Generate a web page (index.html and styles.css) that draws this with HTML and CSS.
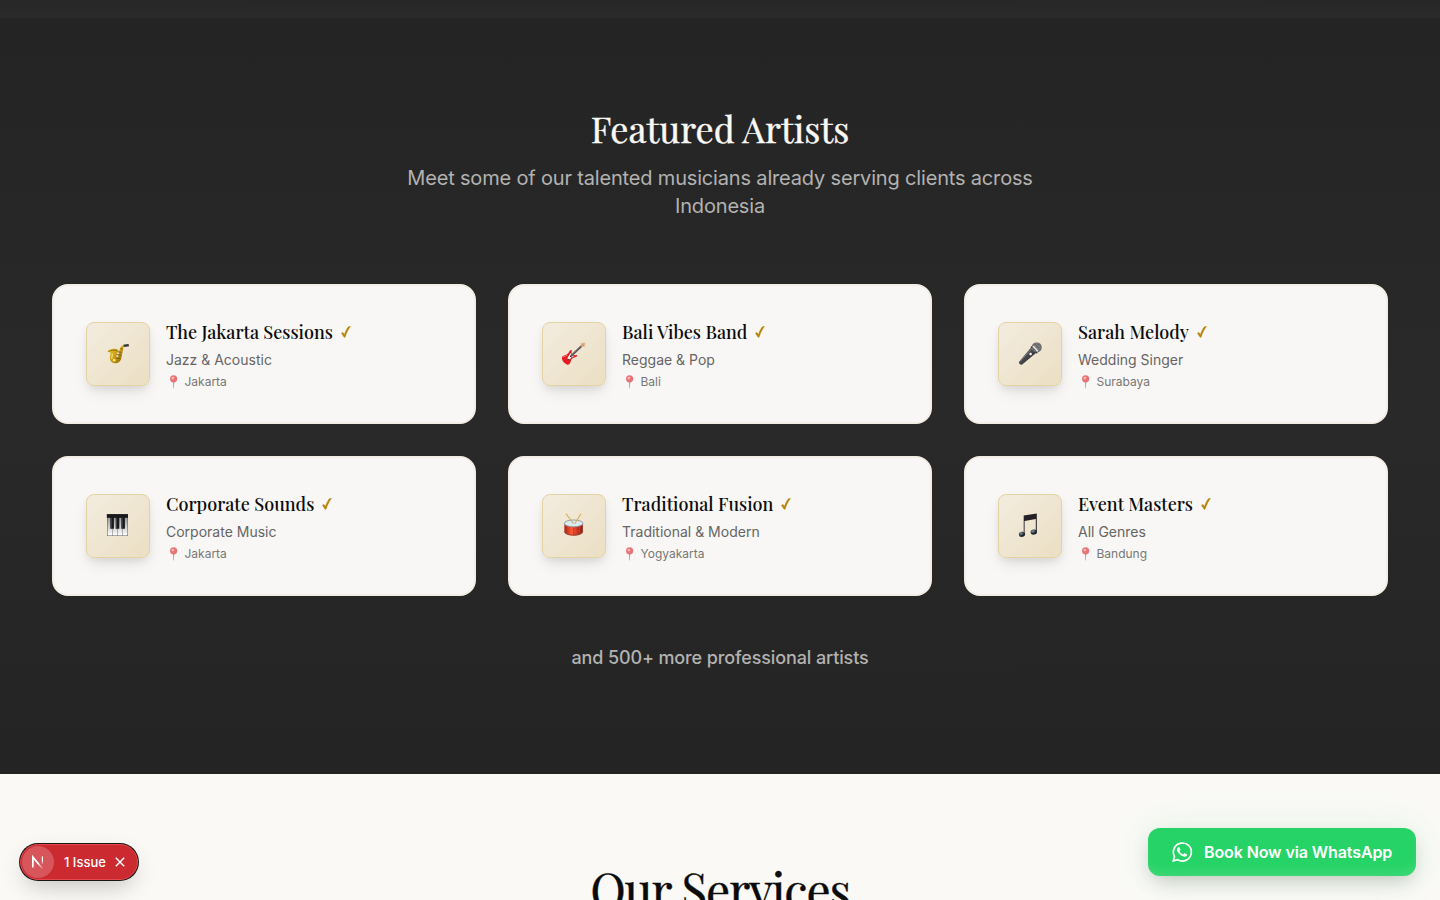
FILE: index.html
```html
<!DOCTYPE html>
<html lang="en">
<head>
<meta charset="utf-8">
<title>Featured Artists</title>
<link rel="stylesheet" href="styles.css">
</head>
<body>
<svg class="defs" width="0" height="0" aria-hidden="true">
  <defs>
    <linearGradient id="gold" x1="0" y1="0" x2="1" y2="1"><stop offset="0" stop-color="#f4d53a"/><stop offset=".5" stop-color="#c99a12"/><stop offset="1" stop-color="#705010"/></linearGradient>
    <linearGradient id="black" x1="0" y1="0" x2="1" y2="1"><stop offset="0" stop-color="#77777b"/><stop offset="1" stop-color="#161618"/></linearGradient>
    <linearGradient id="keys" x1="0" y1="0" x2="0" y2="1"><stop offset="0" stop-color="#999"/><stop offset="1" stop-color="#fff"/></linearGradient>
    <linearGradient id="drumred" x1="0" y1="0" x2="1" y2="0"><stop offset="0" stop-color="#a81f12"/><stop offset=".4" stop-color="#ff5a36"/><stop offset="1" stop-color="#8e170e"/></linearGradient>
    <radialGradient id="note" cx=".4" cy=".3"><stop offset="0" stop-color="#8296a3"/><stop offset="1" stop-color="#1b2025"/></radialGradient>
    <symbol id="check" viewBox="0 0 10 12"><path d="M.3 7.200 1.900 6.300 3.400 8.300C4.500 5 6 2 7.600.6L9.800.3C7.500 3 5.600 7 4.200 11.200L3.100 11.500Z" fill="#b8860b" stroke="#b8860b" stroke-width=".2"/></symbol>
    <symbol id="pin" viewBox="0 0 14 14"><path d="M7 6h1.300l-.4 7.500h-.5z" fill="#65717a"/><circle cx="7.600" cy="3.800" r="3.600" fill="#df2f35"/><circle cx="6.900" cy="3.100" r="1.300" fill="#ff9a96"/></symbol>
  </defs>
</svg>
<div class="previous"></div>
<section class="artists">
  <h2 class="heading">Featured Artists</h2>
  <p class="lead">Meet some of our talented musicians already serving clients across Indonesia</p>
  <div class="grid">
    <article class="card">
      <div class="tile"><svg width="24" height="24" viewBox="0 0 24 24"><path d="M1.300 9.600C3.500 6.800 9.500 5.800 12.600 8.200L11 11.500C10.500 14 10.200 15.200 10.700 15.800c.6.500 1.200-.8 1.600-2.300l1.500-6.300c.4-2 1.800-3.700 4.200-4.200l4.200-.8.3 1.400-4.200 1c-1 .4-.9 1.300-1.200 3l-1.500 7.500c-.8 4.800-3.700 6.900-7.800 5.900-3-.8-4.400-3.300-3.800-6.300l.6-3.900C4.500 10.600 3 10.200 1.300 9.600z" fill="url(#gold)"/><path d="M17.200 2.700 22.500 2l.6 2.200-4.700.7z" fill="#30363a"/><path d="M11.500 9.700 15.500 10.300M10.700 12.500l4.300.7M10 15.700l4.200.8M14.700 6.700l2 .4" stroke="#604706" stroke-width=".8"/><path d="M2.500 9.500C5 8 8.500 7.600 11 8.600" fill="none" stroke="#76580a" stroke-width=".8"/><circle cx="8.200" cy="18.200" r="1.400" fill="#ffe657"/><path d="M6.300 11.500 5.800 17" stroke="#fff08a" stroke-width="1"/></svg></div>
      <div class="info">
        <h3 class="name"><span>The Jakarta Sessions</span><svg class="check"><use href="#check"/></svg></h3>
        <p class="genre">Jazz &amp; Acoustic</p>
        <p class="city"><svg class="pin"><use href="#pin"/></svg>Jakarta</p>
      </div>
    </article>
    <article class="card">
      <div class="tile"><svg width="24" height="24" viewBox="0 0 24 24"><path d="M.2 14.800c1.500-1.700 4-1.400 5.800-3.200 1.200-1.200 1.300-3.200 3-3.500.8-.1 1 .8.700 1.600-.5 1.300.1 2 1.100 2.700.9.700 2 1.100 3.300.6 1.200-.4 1.500.7.8 1.300-1.400 1.100-3.700 1.100-4.900 2.500-1.700 2-1.300 5.700-4.100 5.900C3.500 22.800-1.300 18 .2 14.800z" fill="#e51b23"/><path d="M1 15c1.500-.9 3-.8 4.400-1.900" stroke="#ff7470" fill="none"/><path d="M5.300 16.200 8.600 11l3.300 3.300-5.200 3.500z" fill="#eee"/><path d="M8.800 14.200 19.800 3.800" stroke="#555055" stroke-width="2"/><path d="m9.500 12.800 9.900-9.500" stroke="#b7a9a7" stroke-width=".5"/><path d="m18.400 3.400 2.200-2.700c1-.7 2.500-.1 2.900.9.200 1.200-.6 2-3.200 3.600z" fill="#e2b188"/><path d="m19.200 1.300 3.200 3.300" stroke="#936e51" stroke-width=".6"/><path d="m5.800 16.800 1.700 1.500M8 14l1.700 1.700" stroke="#383b40"/></svg></div>
      <div class="info">
        <h3 class="name"><span>Bali Vibes Band</span><svg class="check"><use href="#check"/></svg></h3>
        <p class="genre">Reggae &amp; Pop</p>
        <p class="city"><svg class="pin"><use href="#pin"/></svg>Bali</p>
      </div>
    </article>
    <article class="card">
      <div class="tile mic"><svg width="24" height="24" viewBox="0 0 24 24"><path d="M12.600 6 18 11 4.200 22.500c-1.300 1-4-1-3.100-2.800z" fill="url(#black)"/><path d="m2 19.500 10.800-11.800" stroke="#8c8c90" stroke-width=".7"/><path d="M12.600 5.500 18.300 11.600l1.600-.7-6.500-7z" fill="#242426"/><circle cx="18.700" cy="5.400" r="5" fill="#656567"/><path d="m14.300 4.400 5.600 5.500M15.500 2.500l6.200 6.200M17.400 1l5.400 5.500M14 7.500 20 1M15.800 9l6.400-6.200M18 10l5.200-5" stroke="#999" stroke-width=".5"/><path d="m15 4 4.900 5.300" stroke="#ededed" stroke-width="1.300"/><circle cx="12.600" cy="12" r="1.200" fill="#fff"/></svg></div>
      <div class="info">
        <h3 class="name"><span>Sarah Melody</span><svg class="check"><use href="#check"/></svg></h3>
        <p class="genre">Wedding Singer</p>
        <p class="city"><svg class="pin"><use href="#pin"/></svg>Surabaya</p>
      </div>
    </article>
    <article class="card">
      <div class="tile"><svg width="24" height="24" viewBox="0 0 24 24"><path d="M1 0h21v22H1z" fill="#555"/><path d="M1.500 3.500h4.600v18H1.500zM6.500 3.500h4.600v18H6.500zM11.500 3.500h4.800v18h-4.800zM16.700 3.500h4.800v18h-4.800z" fill="url(#keys)"/><path d="M.8.200H22v3.500H.8zM4.300 3.500h3.600v11.200H4.300zM9.700 3.500h3.600v11.200H9.700zM15.300 3.500h3.600v11.200h-3.600z" fill="#18191b"/><path d="M5.200 4v10M10.600 4v10M16.200 4v10" stroke="#606165" stroke-width=".6"/></svg></div>
      <div class="info">
        <h3 class="name"><span>Corporate Sounds</span><svg class="check"><use href="#check"/></svg></h3>
        <p class="genre">Corporate Music</p>
        <p class="city"><svg class="pin"><use href="#pin"/></svg>Jakarta</p>
      </div>
    </article>
    <article class="card">
      <div class="tile"><svg width="24" height="24" viewBox="0 0 24 24"><g transform="translate(0 -.6)"><path d="M2.400 9.800v8.700c1.200 5.100 17.200 5.100 18.400 0V9.800z" fill="url(#drumred)"/><path d="M2.500 18c1.500 4.800 16.700 4.800 18.200 0" fill="none" stroke="#8a4a44" stroke-width=".9"/><path d="M5.500 13v6.500M11.600 14v7.500M17.700 13v6.500" stroke="#c83b29" stroke-width="1.100"/><ellipse cx="11.600" cy="10" rx="9.300" ry="3.400" fill="#dcecf3" stroke="#8b999e" stroke-width=".9"/><path d="m4.300.8 7 9.200M18.700.8 13 10" stroke="#d5ae68" stroke-width="1.100" stroke-linecap="round"/></g></svg></div>
      <div class="info">
        <h3 class="name"><span>Traditional Fusion</span><svg class="check"><use href="#check"/></svg></h3>
        <p class="genre">Traditional &amp; Modern</p>
        <p class="city"><svg class="pin"><use href="#pin"/></svg>Yogyakarta</p>
      </div>
    </article>
    <article class="card">
      <div class="tile note"><svg width="24" height="24" viewBox="0 0 24 24"><path d="M6.700 1.600 19.800-.6v18.800h-1V5.100L7.600 7.100v13.400H6.700z" fill="#252126"/><ellipse cx="4.900" cy="20.300" rx="3.100" ry="2.500" fill="url(#note)" transform="rotate(-12 5 20)"/><ellipse cx="16.800" cy="18" rx="3.200" ry="2.500" fill="url(#note)" transform="rotate(-12 17 18)"/></svg></div>
      <div class="info">
        <h3 class="name"><span>Event Masters</span><svg class="check"><use href="#check"/></svg></h3>
        <p class="genre">All Genres</p>
        <p class="city"><svg class="pin"><use href="#pin"/></svg>Bandung</p>
      </div>
    </article>
  </div>
  <p class="more">and 500+ more professional artists</p>
</section>
<section class="services">
  <h2 class="services-heading">Our Services</h2>
</section>
<div class="issue">
  <span class="logo"><svg width="18" height="18" viewBox="0 0 18 18"><defs><linearGradient id="fade" x1="0" y1="0" x2="0" y2="1"><stop offset=".5" stop-color="#fff"/><stop offset="1" stop-color="#fff" stop-opacity=".1"/></linearGradient></defs><path d="M3.800 14.500V4L13.500 15.800" fill="none" stroke="url(#fade)" stroke-width="1.500"/><path d="M3.800 14.500V4l6 7.300" fill="none" stroke="#fff" stroke-width="1.500"/><path d="M12.800 3.500h1.200v8h-1.200z" fill="url(#fade)"/></svg></span>
  <span class="issue-text">1 Issue</span>
  <svg width="10" height="10" viewBox="0 0 10 10"><path d="m.8.800 8.400 8.400M9.200.800.800 9.200" stroke="#fff" stroke-width="1.400"/></svg>
</div>
<a class="book"><svg width="20" height="20" viewBox="0 0 24 24" fill="#fff"><path d="M17.472 14.382c-.297-.149-1.758-.867-2.030-.967-.273-.099-.471-.148-.670.150-.197.297-.767.966-.940 1.164-.173.199-.347.223-.644.075-.297-.150-1.255-.463-2.390-1.475-.883-.788-1.480-1.761-1.653-2.059-.173-.297-.018-.458.130-.606.134-.133.298-.347.446-.520.149-.174.198-.298.298-.497.099-.198.050-.371-.025-.520-.075-.149-.669-1.612-.916-2.207-.242-.579-.487-.500-.669-.510-.173-.008-.371-.010-.570-.010-.198 0-.520.074-.792.372-.272.297-1.040 1.016-1.040 2.479 0 1.462 1.065 2.875 1.213 3.074.149.198 2.096 3.200 5.077 4.487.709.306 1.262.489 1.694.625.712.227 1.360.195 1.871.118.571-.085 1.758-.719 2.006-1.413.248-.694.248-1.289.173-1.413-.074-.124-.272-.198-.570-.347z"/><path d="M1.500 22.700 3 17.200A10.800 10.800 0 1 1 7 21.300Z" fill="none" stroke="#fff" stroke-width="2"/></svg><span>Book Now via WhatsApp</span></a>
</body>
</html>
```

FILE: styles.css
```css
* { box-sizing: border-box; }
body { margin: 0; height: 900px; overflow: hidden; background: #faf9f6; font-family: Inter, "Liberation Sans", sans-serif; }
h2, h3, p { margin: 0; }
svg { display: block; flex: none; overflow: visible; }
.defs { position: absolute; }
.previous { height: 18px; background: linear-gradient(#272727, #2a2a2a); }
.artists { height: 756px; padding: 84px 52px 0; background: linear-gradient(#242424, #292929 50%, #242424); text-align: center; }
.heading, .services-heading, .name { font-family: "Playfair Display", "Liberation Serif", serif; font-weight: 500; }
.heading { height: 54px; line-height: 53px; font-size: 36px; font-weight: 400; color: #faf9f6; -webkit-text-stroke: .4px #faf9f6; }
.lead { width: 672px; margin: 8px auto 0; font-size: 20px; line-height: 28px; letter-spacing: -.17px; color: #b3b2b1; }
.grid { display: grid; grid-template-columns: repeat(3, 1fr); gap: 32px; margin-top: 64px; text-align: left; }
.card { height: 140px; padding: 32px; border: 2px solid #f3eee5; border-radius: 16px; background: #f8f7f5; display: flex; align-items: center; gap: 16px; }
.tile { width: 64px; height: 64px; border: 1px solid #e4d3a2; border-radius: 8px; background: linear-gradient(135deg, #f3ecdf, #ebdfc3); box-shadow: 0 8px 16px -4px rgba(0,0,0,.12), 0 3px 6px rgba(0,0,0,.05); display: flex; align-items: center; justify-content: center; }
.tile.mic { padding-right: 1px; }
.tile.note { padding-right: 2px; }
.name { height: 28px; line-height: 28px; font-size: 18px; color: #0b0b0b; display: flex; align-items: center; gap: 8px; white-space: nowrap; }
.check { width: 10px; height: 12px; margin-top: -1px; }
.genre { margin-top: 4px; font-size: 14px; line-height: 20px; color: #666564; }
.city { margin-top: 4px; height: 16px; font-size: 12px; line-height: 16px; color: #787776; display: flex; align-items: center; gap: 4.500px; }
.pin { width: 14px; height: 14px; opacity: .65; }
.more { margin-top: 48px; font-size: 18px; line-height: 28px; font-weight: 500; letter-spacing: -.12px; color: #b3b2b1; }
.services { padding-top: 83px; text-align: center; }
.services-heading { height: 64px; line-height: 64px; font-size: 48px; font-weight: 400; letter-spacing: -.025em; color: #0b0b0b; -webkit-text-stroke: .4px #0b0b0b; }
.issue { position: absolute; left: 20px; top: 844px; width: 118px; height: 36px; border-radius: 18px; background: #ca2a30; border: 1px solid #e5484d; box-shadow: 0 0 0 1px #171717, 0 8px 24px -4px rgba(0,0,0,.2), 0 16px 24px -8px rgba(0,0,0,.05); color: #fff; display: flex; align-items: center; padding-left: 1px; }
.logo { width: 32px; height: 32px; border-radius: 50%; background: #d6565b; display: flex; align-items: center; justify-content: center; }
.issue-text { margin: 0 9px 0 10px; font-size: 13px; line-height: 16px; font-weight: 500; }
.book { position: absolute; left: 1148px; top: 828px; width: 268px; height: 48px; border-radius: 12px; background: #25d366; box-shadow: 0 8px 20px -4px rgba(0,0,0,.2), 0 0 40px rgba(37,211,102,.1), inset 0 -8px 12px -4px rgba(255,255,255,.13); color: #fff; display: flex; align-items: center; padding-left: 24px; gap: 12px; font-size: 16px; font-weight: 600; letter-spacing: -.1px; white-space: nowrap; }
```
